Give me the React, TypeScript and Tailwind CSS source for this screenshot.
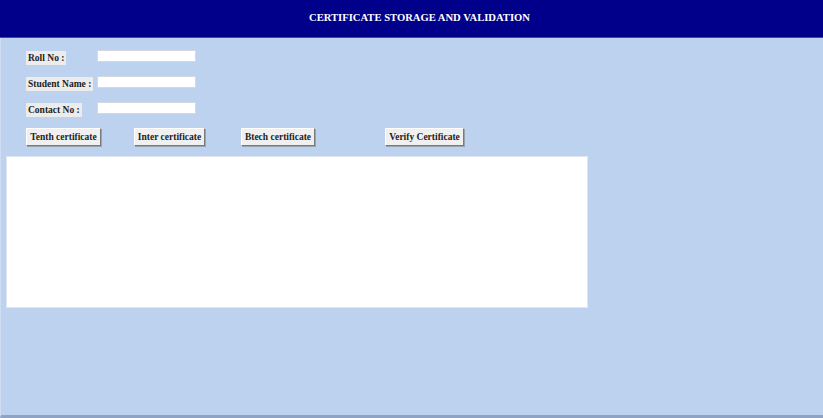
import React from "react";

const serif = { fontFamily: '"Liberation Serif", "Times New Roman", serif' };

function Field({ label }: { label: string }) {
  return (
    <div className="flex items-center h-[14px]">
      <div className="w-[71px] shrink-0">
        <span className="inline-block bg-[#ececec] px-[2px] text-[9.5px] leading-[14px] font-bold text-[#222]">{label}</span>
      </div>
      <div className="w-[99px] h-[12px] bg-white border border-[#d4d9e0]" />
    </div>
  );
}

function Btn({ label, w }: { label: string; w: string }) {
  return (
    <div
      className={`${w} h-[18px] flex items-center justify-center bg-[#f0f0f0] border border-t-[#ffffff] border-l-[#ffffff] border-r-[#7a7a7a] border-b-[#7a7a7a] text-[9.5px] font-bold text-[#222] shadow-[1px_1px_0_#9aa4b0]`}
    >
      {label}
    </div>
  );
}

export default function App() {
  return (
    <div style={serif} className="w-[823px] h-[418px] flex flex-col bg-[#bdd2ee] overflow-hidden">
      <div className="h-[38px] shrink-0 bg-[#00008b] flex items-center justify-center border-b border-[#3a4aa8]">
        <span className="text-white text-[10.6px] font-bold mt-[-1px] ml-[16px]">CERTIFICATE STORAGE AND VALIDATION</span>
      </div>
      <div className="flex-1 flex flex-col border-l border-[#d0dcf0] border-b-[3px] border-b-[#8fa3c4]">
        <div className="pl-[25px] pt-[11px] flex flex-col gap-[12px]">
          <Field label="Roll No :" />
          <Field label="Student Name :" />
          <Field label="Contact No :" />
        </div>
        <div className="pl-[25px] pt-[13px] flex items-center">
          <Btn label="Tenth certificate" w="w-[75px]" />
          <div className="w-[33px]" />
          <Btn label="Inter certificate" w="w-[71px]" />
          <div className="w-[36px]" />
          <Btn label="Btech certificate" w="w-[74px]" />
          <div className="w-[70px]" />
          <Btn label="Verify Certificate" w="w-[79px]" />
        </div>
        <div className="ml-[5px] mt-[10px] w-[582px] h-[152px] bg-white border border-[#dfe6ef]" />
      </div>
    </div>
  );
}
